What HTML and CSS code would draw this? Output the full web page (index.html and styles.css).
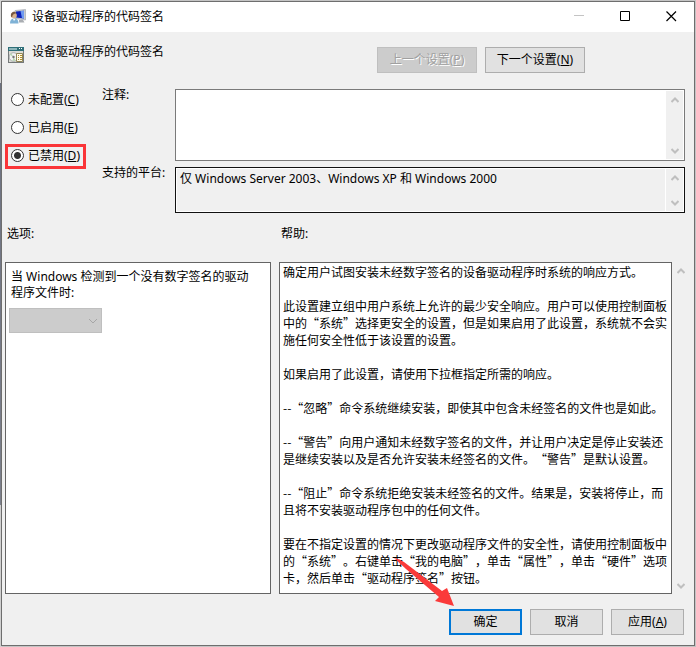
FILE: index.html
```html
<!DOCTYPE html>
<html lang="zh-CN">
<head>
    <meta charset="UTF-8">
    <meta name="viewport" content="width=device-width, initial-scale=1.0">
    <title>设备驱动程序的代码签名</title>
    <link rel="stylesheet" href="styles.css">
</head>
<body>

<form class="window">
    <div class="titlebar">
        <svg class="icon" viewBox="0 0 16 16">
            <path d="M5 1.500l10.500-1v10.500L5 9.500z" fill="#c8ccd0" stroke="#9aa0a8" stroke-width=".6"/>
            <path d="M6 2.500l8-.8v7.800l-8-1z" fill="#0f22b8"/>
            <path d="M10.500 2l3.500-.3v7.800l-2-.3z" fill="#6f9af0"/>
            <path d="M9 11h4l1.500 2.500H9z" fill="#a9adb2"/>
            <path d="M0 14.500c0-3.500 1.500-5 4-5s4.500 1 4.500 5z" fill="#7fb2d6"/>
            <path d="M3 10l1 2 1.500-2z" fill="#fff"/>
            <circle cx="4" cy="6.500" r="2.800" fill="#d9b48c"/>
            <path d="M1 7.500c-1-5 4.500-6 5.500-3-2 0-3 .5-4 2l-.5 2z" fill="#7a5a40"/>
        </svg>
        <span class="title">设备驱动程序的代码签名</span>
        <button type="button" class="caption" aria-label="最小化" disabled>
            <svg viewBox="0 0 11 11"><path d="M0 4.500h10" stroke="#c4c4c4"/></svg>
        </button>
        <button type="button" class="caption" aria-label="最大化">
            <svg viewBox="0 0 11 11"><path d="M.5.5h9v9h-9z" fill="none" stroke="#000"/></svg>
        </button>
        <button type="button" class="caption" aria-label="关闭">
            <svg viewBox="0 0 11 11"><path d="M.5.5l9.500 9.500M10 .5L.5 10" stroke="#000" stroke-width="1.200"/></svg>
        </button>
    </div>

    <div class="header">
        <svg class="icon" viewBox="0 0 16 16">
            <path d="M0 0h16v16H0z" fill="#75797a"/>
            <path d="M1 4h14v11H1z" fill="#dcdcd6"/>
            <path d="M0 0h16v4H0z" fill="#2f6f78"/>
            <path d="M1 1h8v2H1z" fill="#8db6bb"/>
            <path d="M11 1h1v1h-1zM13 1h1v1h-1z" fill="#fff"/>
            <circle cx="5.500" cy="10" r="4.300" fill="#f3f3f3" stroke="#92979a" stroke-width=".7"/>
            <path d="M5.500 10L2 8l1-2zM5.500 10l2 3.500-3 .5z" fill="#b7d9b0"/>
            <circle cx="5.500" cy="10" r="1.200" fill="#777"/>
            <path d="M8.500 6.500h6v8h-6z" fill="#fffbe6" stroke="#8f8455"/>
            <path d="M10 8.500h1M12 8.500h2M10 10.500h1M12 10.500h2M10 12.500h1M12 12.500h2" stroke="#b08e2c"/>
        </svg>
        <span class="policy-name">设备驱动程序的代码签名</span>
        <button type="button" class="btn nav-btn" disabled>上一个设置(<u>P</u>)</button>
        <button type="button" class="btn nav-btn">下一个设置(<u>N</u>)</button>
    </div>

    <div class="settings">
        <div class="states">
            <label class="state"><input type="radio" name="state">未配置(<u>C</u>)</label>
            <label class="state"><input type="radio" name="state">已启用(<u>E</u>)</label>
            <label class="state marked"><input type="radio" name="state" checked>已禁用(<u>D</u>)</label>
        </div>
        <div class="fields">
            <label for="comment">注释:</label>
            <div class="box comment-box">
                <textarea id="comment"></textarea>
                <div class="scrollbar">
                    <svg viewBox="0 0 8 6"><path d="M.5 5L4 1.500 7.500 5"/></svg>
                    <svg viewBox="0 0 8 6"><path d="M.5 1L4 4.500 7.500 1"/></svg>
                </div>
            </div>
            <label for="platform">支持的平台:</label>
            <div class="box platform-box">
                <textarea id="platform" readonly>仅 Windows Server 2003、Windows XP 和 Windows 2000</textarea>
                <div class="scrollbar">
                    <svg viewBox="0 0 8 6"><path d="M.5 5L4 1.500 7.500 5"/></svg>
                    <svg viewBox="0 0 8 6"><path d="M.5 1L4 4.500 7.500 1"/></svg>
                </div>
            </div>
        </div>
    </div>

    <div class="panels">
        <div class="column options-column">
            <div class="caption-text">选项:</div>
            <div class="panel options">
                <label for="action">当 Windows 检测到一个没有数字签名的驱动程序文件时:</label>
                <div class="select-wrap">
                    <select id="action" disabled></select>
                    <svg viewBox="0 0 10 6"><path d="M1 1l4 4 4-4"/></svg>
                </div>
            </div>
        </div>
        <div class="column help-column">
            <div class="caption-text">帮助:</div>
            <div class="help-row">
                <div class="panel help">
                    <p>确定用户试图安装未经数字签名的设备驱动程序时系统的响应方式。</p>
                    <p>此设置建立组中用户系统上允许的最少安全响应。用户可以使用控制面板中的“系统”选择更安全的设置，但是如果启用了此设置，系统就不会实施任何安全性低于该设置的设置。</p>
                    <p>如果启用了此设置，请使用下拉框指定所需的响应。</p>
                    <p>--“忽略”命令系统继续安装，即使其中包含未经签名的文件也是如此。</p>
                    <p>--“警告”向用户通知未经数字签名的文件，并让用户决定是停止安装还是继续安装以及是否允许安装未经签名的文件。“警告”是默认设置。</p>
                    <p>--“阻止”命令系统拒绝安装未经签名的文件。结果是，安装将停止，而且将不安装驱动程序包中的任何文件。</p>
                    <p>要在不指定设置的情况下更改驱动程序文件的安全性，请使用控制面板中的“系统”。右键单击“我的电脑”，单击“属性”，单击“硬件”选项卡，然后单击“驱动程序签名”按钮。</p>
                </div>
                <div class="scrollbar">
                    <svg viewBox="0 0 8 6"><path d="M.5 5L4 1.500 7.500 5"/></svg>
                    <svg viewBox="0 0 8 6"><path d="M.5 1L4 4.500 7.500 1"/></svg>
                </div>
            </div>
        </div>
    </div>

    <div class="footer">
        <div class="ok-wrap">
            <button type="button" class="btn ok">确定</button>
            <svg class="arrow" viewBox="0 0 60 48"><path d="M0 0Q6 1 10 4L48 33 53 30 60 48 41 43 45 39 12 11z" fill="#fa3a3a"/></svg>
        </div>
        <button type="button" class="btn">取消</button>
        <button type="button" class="btn">应用(<u>A</u>)</button>
    </div>
</form>

</body>
</html>
```

FILE: styles.css
```css
* {
    box-sizing: border-box;
}

body {
    margin: 0;
    padding: 1px;
    background: linear-gradient(#d4d4d4 83px, #6c7180 83px, #7c808c 505px, #d0d0d0 505px) left / 2px 100% no-repeat, #c4c4c4;
    font-family: "Noto Sans", "Noto Sans CJK SC", sans-serif;
    font-size: 12px;
    line-height: 16px;
    color: #000;
}

button,
textarea,
select {
    font: inherit;
    color: inherit;
}

.window {
    border: 1px solid #6e6e6e;
    background-color: #f0f0f0;
}

.icon {
    width: 16px;
    height: 16px;
    flex: none;
}

.titlebar {
    display: flex;
    align-items: center;
    height: 30px;
    padding-left: 8px;
    background-color: #fff;
}

.title {
    flex: 1;
    margin-left: 6px;
}

.caption {
    display: flex;
    align-items: center;
    justify-content: center;
    width: 46px;
    height: 30px;
    padding: 0 0 2px;
    border: none;
    background: none;
}

.caption svg {
    width: 11px;
    height: 11px;
}

.header {
    display: flex;
    align-items: flex-start;
    gap: 8px;
    padding: 15px 109px 15px 6px;
}

.policy-name {
    flex: 1;
    margin-top: -3px;
}

.btn {
    width: 73px;
    height: 26px;
    padding: 0;
    border: 1px solid #adadad;
    background-color: #e1e1e1;
}

.btn:hover {
    border-color: #0078d7;
}

.btn:disabled {
    border-color: #bfbfbf;
    background-color: #ccc;
    color: #a0a0a0;
    text-shadow: 1px 1px 0 #fff;
}

.nav-btn {
    width: 100px;
}

.settings {
    display: flex;
    padding: 0 9px 0 3px;
}

.states {
    display: flex;
    flex-direction: column;
    gap: 3px;
    width: 97px;
    align-items: flex-start;
}

.state {
    display: flex;
    align-items: center;
    height: 25px;
    padding: 0 3px 2px;
    border: 3px solid transparent;
}

.marked {
    border-color: #fa3538;
}

.state input {
    appearance: none;
    width: 13px;
    height: 13px;
    margin: 0 4px 0 0;
    border: 1px solid #333;
    border-radius: 50%;
    background-color: #fff;
}

.state input:checked {
    background-image: radial-gradient(circle, #333 3px, #fff 4px);
}

.fields {
    flex: 1;
    display: grid;
    grid-template-columns: 73px 1fr;
    row-gap: 6px;
    padding-top: 1px;
}

.fields label {
    margin-top: -2px;
}

.box {
    display: flex;
    padding: 1px;
    border: 1px solid #7a7a7a;
    background-color: #fff;
}

.box textarea {
    flex: 1;
    min-width: 0;
    padding: 2px 3px;
    border: none;
    outline: none;
    resize: none;
    background: none;
}

.comment-box {
    height: 72px;
}

.platform-box {
    height: 46px;
    border-color: #111;
}

.platform-box textarea {
    margin-right: 1px;
    background-color: #f0f0f0;
}

.scrollbar {
    display: flex;
    flex-direction: column;
    justify-content: space-between;
    align-items: center;
    width: 17px;
    padding: 6px 0 5px;
    background-color: #f0f0f0;
}

.scrollbar svg {
    width: 8px;
    height: 6px;
    fill: none;
    stroke: #bfbfbf;
    stroke-width: 2;
}

.panels {
    display: flex;
    gap: 8px;
    padding: 13px 4px 0 3px;
}

.column {
    display: flex;
    flex-direction: column;
    min-width: 0;
}

.options-column {
    flex: 266 0 0;
}

.help-column {
    flex: 411 0 0;
}

.caption-text {
    padding: 0 2px 20px;
}

.panel {
    flex: 1;
    border: 1px solid #646464;
    background-color: #fff;
}

.options {
    padding: 6px 3px;
}

.options label {
    display: block;
    padding: 0 10px 0 2px;
}

.select-wrap {
    position: relative;
    width: 93px;
    margin-top: 7px;
}

.select-wrap select {
    display: block;
    appearance: none;
    width: 100%;
    height: 25px;
    border: 1px solid #bfbfbf;
    border-radius: 0;
    background-color: #ccc;
    opacity: 1;
}

.select-wrap svg {
    position: absolute;
    right: 4px;
    top: 10px;
    width: 10px;
    height: 6px;
    fill: none;
    stroke: #a6a6a6;
    pointer-events: none;
}

.help-row {
    flex: 1;
    display: flex;
}

.help-row .scrollbar {
    width: 18px;
}

.help {
    padding: 0 3px 7px;
    font-family: "Noto Sans CJK SC", sans-serif;
    line-height: 17px;
    text-spacing-trim: space-all;
}

.help p {
    margin: 0 0 17px;
}

.help p:last-child {
    margin-bottom: 0;
}

.footer {
    display: flex;
    justify-content: flex-end;
    gap: 8px;
    padding: 15px 10px 10px;
}

.ok-wrap {
    position: relative;
    display: flex;
}

.ok {
    border: 2px solid #0078d7;
}

.arrow {
    position: absolute;
    left: -55px;
    bottom: 29px;
    width: 60px;
    height: 48px;
    pointer-events: none;
}
```
